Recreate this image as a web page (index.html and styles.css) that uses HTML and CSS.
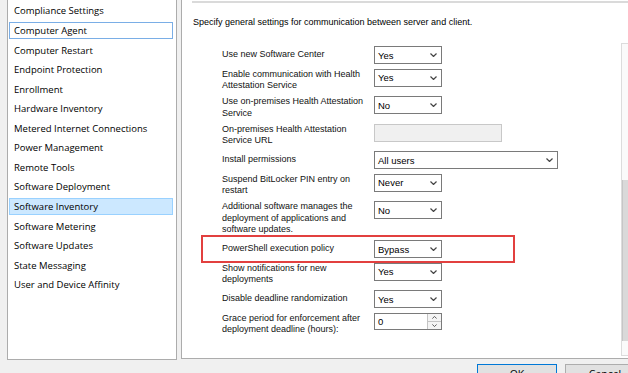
FILE: index.html
```html
<!DOCTYPE html>
<html>
<head>
  <title>Client Settings</title>
  <link rel="stylesheet" href="styles.css">
</head>
<body>
  <div class="dialog">
    <div class="main">
      <div class="nav">
        <ul class="nav-list">
          <li>Compliance Settings</li>
          <li class="focused">Computer Agent</li>
          <li>Computer Restart</li>
          <li>Endpoint Protection</li>
          <li>Enrollment</li>
          <li>Hardware Inventory</li>
          <li>Metered Internet Connections</li>
          <li>Power Management</li>
          <li>Remote Tools</li>
          <li>Software Deployment</li>
          <li class="selected">Software Inventory</li>
          <li>Software Metering</li>
          <li>Software Updates</li>
          <li>State Messaging</li>
          <li>User and Device Affinity</li>
        </ul>
      </div>

      <div class="page">
        <div class="page-rule"></div>
        <p class="page-desc">Specify general settings for communication between server and client.</p>

        <div class="settings">
          <div class="settings-body">
            <div class="row">
              <div class="label one">Use new Software Center</div>
              <div class="select"><span>Yes</span><svg class="chev" viewBox="0 0 7 4"><polyline points="0.5,0.5 3.5,3.5 6.5,0.5"/></svg></div>
            </div>
            <div class="row">
              <div class="label">Enable communication with Health<br>Attestation Service</div>
              <div class="select"><span>Yes</span><svg class="chev" viewBox="0 0 7 4"><polyline points="0.5,0.5 3.5,3.5 6.5,0.5"/></svg></div>
            </div>
            <div class="row">
              <div class="label">Use on-premises Health Attestation<br>Service</div>
              <div class="select"><span>No</span><svg class="chev" viewBox="0 0 7 4"><polyline points="0.5,0.5 3.5,3.5 6.5,0.5"/></svg></div>
            </div>
            <div class="row">
              <div class="label">On-premises Health Attestation<br>Service URL</div>
              <div class="textbox"></div>
            </div>
            <div class="row">
              <div class="label one">Install permissions</div>
              <div class="select wide"><span>All users</span><svg class="chev" viewBox="0 0 7 4"><polyline points="0.5,0.5 3.5,3.5 6.5,0.5"/></svg></div>
            </div>
            <div class="row">
              <div class="label">Suspend BitLocker PIN entry on<br>restart</div>
              <div class="select"><span>Never</span><svg class="chev" viewBox="0 0 7 4"><polyline points="0.5,0.5 3.5,3.5 6.5,0.5"/></svg></div>
            </div>
            <div class="row">
              <div class="label">Additional software manages the<br>deployment of applications and<br>software updates.</div>
              <div class="select"><span>No</span><svg class="chev" viewBox="0 0 7 4"><polyline points="0.5,0.5 3.5,3.5 6.5,0.5"/></svg></div>
            </div>
            <div class="row">
              <div class="label one">PowerShell execution policy</div>
              <div class="select"><span>Bypass</span><svg class="chev" viewBox="0 0 7 4"><polyline points="0.5,0.5 3.5,3.5 6.5,0.5"/></svg></div>
            </div>
            <div class="row">
              <div class="label">Show notifications for new<br>deployments</div>
              <div class="select"><span>Yes</span><svg class="chev" viewBox="0 0 7 4"><polyline points="0.5,0.5 3.5,3.5 6.5,0.5"/></svg></div>
            </div>
            <div class="row">
              <div class="label one">Disable deadline randomization</div>
              <div class="select"><span>Yes</span><svg class="chev" viewBox="0 0 7 4"><polyline points="0.5,0.5 3.5,3.5 6.5,0.5"/></svg></div>
            </div>
            <div class="row">
              <div class="label">Grace period for enforcement after<br>deployment deadline (hours):</div>
              <div class="numeric">
                <span class="numeric-value">0</span>
                <div class="spin">
                  <div class="spin-btn"><svg viewBox="0 0 7 4"><polyline points="0.5,3.5 3.5,0.5 6.5,3.5"/></svg></div>
                  <div class="spin-btn"><svg viewBox="0 0 7 4"><polyline points="0.5,0.5 3.5,3.5 6.5,0.5"/></svg></div>
                </div>
              </div>
            </div>

            <!-- highlight drawn over the PowerShell row -->
            <div class="callout"></div>
          </div>

          <div class="scrollbar">
            <div class="sb-arrow"><svg viewBox="0 0 7 4"><polyline points="0.5,3.5 3.5,0.5 6.5,3.5"/></svg></div>
            <div class="sb-track"></div>
            <div class="sb-thumb"><span class="sb-grip"></span></div>
            <div class="sb-track short"></div>
            <div class="sb-arrow"><svg viewBox="0 0 7 4"><polyline points="0.5,0.5 3.5,3.5 6.5,0.5"/></svg></div>
          </div>
        </div>
      </div>
    </div>

    <div class="buttons">
      <button class="btn btn-default">OK</button>
      <button class="btn">Cancel</button>
    </div>
  </div>
</body>
</html>
```

FILE: styles.css
```css
body {
  margin: 0;
  background-color: #f0f0f0;
  overflow: hidden;
  width: 628px;
  height: 373px;
  font-family: "Open Sans", Arial, sans-serif;
  color: #000;
}

.dialog {
  width: 660px;
}

.main {
  display: flex;
  padding-left: 7px;
  height: 360px;
}

/* left list of settings groups */
.nav {
  width: 168px;
  flex-shrink: 0;
  background-color: white;
  border: 1px solid #acacac;
  border-top: none;
  margin-right: 4px;
}

.nav-list {
  list-style: none;
  margin: 0;
  padding: 2.4px 0 0 0;
}

.nav-list li {
  height: 15px;
  line-height: 15px;
  margin: 0 3px 2.57px 1px;
  padding-left: 4px;
  border: 1px solid transparent;
  font-size: 9.5px;
  white-space: nowrap;
}

.nav-list li.focused {
  border-color: #7aaee6;
}

.nav-list li.selected {
  background-color: #cce8ff;
  border-color: #99d1ff;
}

/* right settings page */
.page {
  width: 461px;
  flex-shrink: 0;
  height: 358px;
  background-color: white;
  border-left: 1px solid #acacac;
  border-bottom: 1px solid #acacac;
}

.page-rule {
  height: 2px;
  margin: 1px 0 0 10px;
  background-color: #dadada;
}

.page-desc {
  margin: 14px 0 0 11px;
  font-family: "Liberation Sans", Arial, sans-serif;
  font-size: 9px;
  line-height: 11px;
}

.settings {
  display: flex;
  margin-top: 15px;
  height: 313px;
}

.settings-body {
  position: relative;
  flex: 1;
  padding: 3px 0 0 40px;
}

.row {
  display: flex;
  margin-bottom: 4.5px;
}

.label {
  width: 152px;
  flex-shrink: 0;
  font-family: "Liberation Sans", Arial, sans-serif;
  font-size: 9px;
  line-height: 11.5px;
  color: #111;
}

.label.one {
  padding-top: 3px;
}

.select {
  display: flex;
  align-items: center;
  justify-content: space-between;
  box-sizing: border-box;
  width: 68px;
  height: 18px;
  padding: 0 4px 0 3px;
  border: 1px solid #7a7a7a;
  background-color: white;
  font-family: "Liberation Sans", Arial, sans-serif;
  font-size: 9.5px;
}

.select.wide {
  width: 184px;
}

.chev {
  width: 7px;
  height: 4px;
}

.chev polyline,
.spin-btn polyline,
.sb-arrow polyline {
  fill: none;
  stroke: #444;
  stroke-width: 1.2;
}

.textbox {
  box-sizing: border-box;
  width: 128px;
  height: 18px;
  border: 1px solid #c8c8c8;
  background-color: #f0f0f0;
}

.numeric {
  display: flex;
  box-sizing: border-box;
  width: 68px;
  height: 17px;
  border: 1px solid #7a7a7a;
  background-color: white;
  font-family: "Liberation Sans", Arial, sans-serif;
  font-size: 9.5px;
}

.numeric-value {
  flex: 1;
  padding-left: 3px;
  line-height: 15px;
}

.spin {
  display: flex;
  flex-direction: column;
  width: 13px;
  border-left: 1px solid #c4c4c4;
}

.spin-btn {
  flex: 1;
  display: flex;
  align-items: center;
  justify-content: center;
  background-color: #f4f4f4;
}

.spin-btn + .spin-btn {
  border-top: 1px solid #c4c4c4;
}

.spin-btn svg {
  width: 5px;
  height: 3px;
}

.callout {
  position: absolute;
  left: 19px;
  top: 192px;
  width: 310px;
  height: 24px;
  border: 2px solid #e2403f;
}

/* vertical scrollbar, cut off by the window edge */
.scrollbar {
  display: flex;
  flex-direction: column;
  width: 17px;
  margin-right: 3px;
  border: 1px solid #dcdcdc;
  background-color: #fafafa;
}

.sb-arrow {
  height: 14px;
  display: flex;
  align-items: center;
  justify-content: center;
}

.sb-arrow svg {
  width: 6px;
  height: 4px;
}

.sb-track {
  height: 122px;
}

.sb-track.short {
  height: 0;
  flex: 1;
}

.sb-thumb {
  display: flex;
  align-items: center;
  justify-content: center;
  height: 161px;
  background-color: #d9d9d9;
  border-left: 1px solid #c6c6c6;
}

.sb-grip {
  width: 5px;
  height: 5px;
  border-top: 1px solid #777;
  border-bottom: 1px solid #777;
  box-sizing: border-box;
}

.sb-grip::after {
  content: "";
  display: block;
  height: 1px;
  margin-top: 1px;
  background-color: #777;
}

.buttons {
  display: flex;
  gap: 8px;
  padding: 4px 0 0 477px;
}

.btn {
  width: 80px;
  height: 23px;
  padding: 0 0 4px 0;
  border: 1px solid #adadad;
  background-color: #e1e1e1;
  font-family: "Open Sans", Arial, sans-serif;
  font-size: 10.5px;
  color: #000;
}

.btn-default {
  border-color: #0078d7;
}
```
